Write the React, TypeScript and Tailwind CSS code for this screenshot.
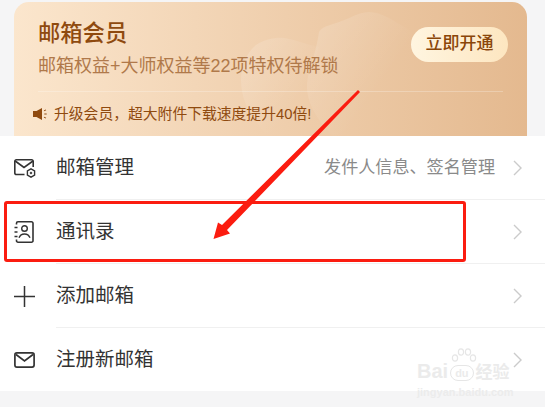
const cjk = "font-['Liberation_Sans','Noto_Sans_CJK_SC',sans-serif]";

function Chevron() {
  return (
    <svg width="9" height="16" viewBox="0 0 9 16" fill="none" stroke="#cbcbcb" strokeWidth="1.4">
      <path d="M1 1l7 7-7 7" />
    </svg>
  );
}

function MailGearIcon() {
  return (
    <svg width="22" height="19" viewBox="0 0 22 19" fill="none" stroke="#333333" strokeWidth="1.6">
      <path d="M10.500 15.500H2.300a1.500 1.500 0 0 1-1.500-1.500V2.300A1.500 1.500 0 0 1 2.300.8h15.400a1.500 1.500 0 0 1 1.500 1.500V8" />
      <path d="M1.200 2l8.800 6.500L19 2" />
      <path d="M17 9.800l3.600 2.100v4.200L17 18.200l-3.600-2.100v-4.200z" strokeWidth="1.400" />
      <circle cx="17" cy="14" r="0.900" fill="#333333" strokeWidth="0.700" />
    </svg>
  );
}

function ContactsIcon() {
  return (
    <svg width="20" height="22" viewBox="0 0 20 22" fill="none" stroke="#333333" strokeWidth="1.600">
      <path d="M2.500 3.500V2.300A1.500 1.500 0 0 1 4 .8h13.500A1.500 1.500 0 0 1 19 2.300v17.400a1.500 1.500 0 0 1-1.500 1.500H4a1.500 1.500 0 0 1-1.500-1.500v-1.200" />
      <circle cx="10.500" cy="7.500" r="2.800" strokeWidth="1.400" />
      <path d="M5 16.800c1-2.600 3-3.800 5.500-3.800s4.500 1.200 5.500 3.800" strokeWidth="1.400" />
      <path d="M0.500 6.500h3M0.500 11h3M0.500 15.500h3" strokeWidth="1.300" />
    </svg>
  );
}

function PlusIcon() {
  return (
    <svg width="21" height="21" viewBox="0 0 21 21" fill="none" stroke="#333333" strokeWidth="1.500">
      <path d="M0 10.500h21M10.500 0v21" />
    </svg>
  );
}

function MailIcon() {
  return (
    <svg width="21" height="16" viewBox="0 0 21 16" fill="none" stroke="#333333" strokeWidth="1.700">
      <rect x="0.900" y="0.900" width="19.200" height="14.200" rx="2" />
      <path d="M2 2.500l8.500 6.500L19 2.500" />
    </svg>
  );
}

function SpeakerIcon() {
  return (
    <svg width="15" height="12" viewBox="0 0 15 12" fill="#8f4a0f">
      <path d="M0 3h3.500L9 0v12L3.500 9H0z" />
      <path d="M10.800 2.400l2-1 .4.800-2 1zM11.300 5.500h2.400v1h-2.400zM10.800 9.600l2 1 .4-.8-2-1z" />
    </svg>
  );
}

function Blob() {
  return (
    <svg className="absolute left-0 top-0" width="513" height="134" viewBox="0 0 513 134" fill="none">
      <defs>
        <linearGradient id="blobFill" x1="0" y1="0" x2="1" y2="0.800">
          <stop offset="0" stopColor="#ffffff" stopOpacity="0.180" />
          <stop offset="0.700" stopColor="#ffffff" stopOpacity="0" />
        </linearGradient>
      </defs>
      <path
        d="M305 30c3-5 8-6 14-8 13-3 24-12 36-12 13 0 24 9 36 15 12 7 14 28 8 46-8 24-30 63-70 63h-10c-14-14-27-32-26-52 1-14 9-30 12-52z"
        fill="url(#blobFill)"
      />
      <path
        d="M227 78c0-14 6-28 15-35 9-6 20-8 29-7 12 2 22 7 34 9l-12 38c0 20 10 36 22 51h-60c-16-14-28-34-28-56z"
        fill="url(#blobFill)"
      />
    </svg>
  );
}

function Row({
  icon,
  title,
  hint,
  last,
}: {
  icon: React.ReactNode;
  title: string;
  hint?: string;
  last?: boolean;
}) {
  return (
    <div className={`flex items-stretch bg-white ${last ? "h-[63px]" : "h-16"}`}>
      <div className="flex w-14 items-center pl-[14px]">{icon}</div>
      <div className={`flex flex-1 items-center pr-[23px] ${last ? "" : "border-b border-[#f0f0f0]"}`}>
        <span className="flex-1 text-[19.500px] leading-none text-[#333333]">{title}</span>
        {hint && <span className="mr-[18px] text-[17.100px] leading-none text-[#8a8a8a]">{hint}</span>}
        <Chevron />
      </div>
    </div>
  );
}

export default function App() {
  return (
    <div className={`relative h-[407px] w-[545px] overflow-hidden bg-[#f5f5f6] pt-[2px] ${cjk}`}>
      <div className="ml-[14px] mr-[18px] h-[134px] overflow-hidden rounded-t-[15px] bg-gradient-to-r from-[#fbe6cd] to-[#e4b98f]">
        <div className="relative flex h-full flex-col pl-6 pr-[19px]">
          <Blob />
          <div className="relative flex items-center justify-between pt-[17px]">
            <div>
              <div className="text-[22.300px] font-medium leading-[30px] text-[#8f4a0f]">邮箱会员</div>
              <div className="mt-[4px] text-[18px] leading-[26px] text-[#b0794a]">
                邮箱权益+大师权益等22项特权待解锁
              </div>
            </div>
            <button className="mb-[10px] h-[35px] w-[97px] rounded-full bg-gradient-to-r from-[#fff5e0] to-[#fde6c0] text-[17px] font-medium text-[#8a4609]">
              立即开通
            </button>
          </div>
          <div className="relative mt-[12px] mr-[5px] h-px bg-white/25" />
          <div className="relative mt-[12px] ml-[-5px] flex items-center gap-[6px]">
            <SpeakerIcon />
            <span className="text-[14.800px] leading-5 text-[#8f4a0f]">升级会员，超大附件下载速度提升40倍!</span>
          </div>
        </div>
      </div>

      <div>
        <Row icon={<MailGearIcon />} title="邮箱管理" hint="发件人信息、签名管理" />
        <Row icon={<ContactsIcon />} title="通讯录" />
        <Row icon={<PlusIcon />} title="添加邮箱" />
        <Row icon={<MailIcon />} title="注册新邮箱" last />
      </div>

      {/* annotation drawn on top of the screenshot */}
      <div className="absolute left-[4px] top-[201px] h-[61px] w-[462px] rounded-[3px] border-[3px] border-[#fb1c10]" />
      <svg className="absolute left-0 top-0" width="545" height="407" viewBox="0 0 545 407">
        <path d="M358 90L222 225l-4-2.500L213.500 239l16.500-5.500-3-3.500L360 92z" fill="#fb1c10" />
      </svg>

      {/* watermark */}
      <div className="absolute left-[417px] top-[350px] w-[100px] text-[#ebebeb]">
        <svg className="absolute left-[34px] top-[-2px]" width="26" height="18" viewBox="0 0 26 18" fill="none" stroke="#e6e6e6" strokeWidth="1.200">
          <ellipse cx="4" cy="10" rx="2.600" ry="3.200" />
          <ellipse cx="10" cy="4" rx="2.600" ry="3.200" />
          <ellipse cx="17" cy="4" rx="2.600" ry="3.200" />
          <ellipse cx="22" cy="10" rx="2.600" ry="3.200" />
        </svg>
        <div className="flex items-end pt-[11px] text-[20px] font-bold leading-none">
          <span>Bai</span>
          <span className="mx-[2px] rounded-full border border-[#e6e6e6] px-[4px] text-[11px] leading-[14px]">du</span>
          <span className="text-[17px]">经验</span>
        </div>
        <div className="mt-[6px] text-[11px] font-bold leading-none text-[#ececec]">jingyan.baidu.com</div>
      </div>
    </div>
  );
}
